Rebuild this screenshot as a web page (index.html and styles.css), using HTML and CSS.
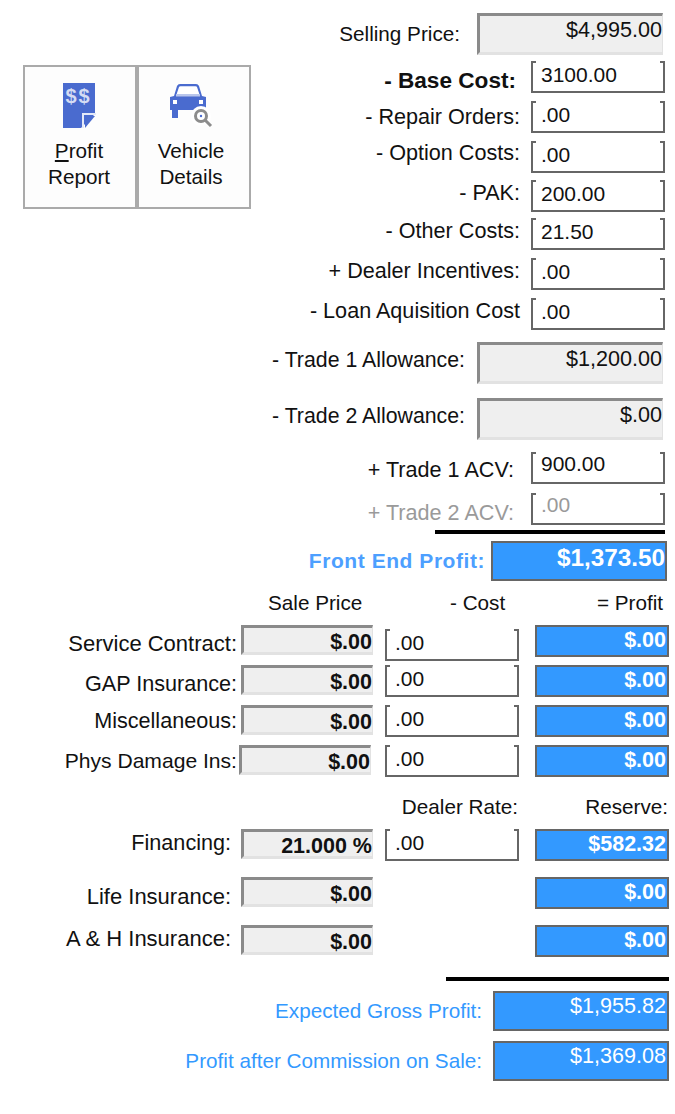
FILE: index.html
```html
<!DOCTYPE html>
<html lang="en">
<head>
  <meta charset="UTF-8" />
  <title>Deal Profit</title>
  <link rel="stylesheet" href="styles.css">
</head>
<body>
  <div class="top">
    <div class="toolbar">
      <div class="tool-btn">
        <svg class="tool-icon" width="40" height="46" viewBox="0 0 40 46">
          <path d="M4 0h32v31L22 45H4z" fill="#4a6bcf"/>
          <text x="19.500" y="20" class="doc-money">$$</text>
          <path d="M23 45V30h14v2H25v13z" fill="#e4e9f8"/>
          <path d="M26 45V33h10z" fill="#4a6bcf"/>
        </svg>
        <span><u>P</u>rofit<br>Report</span>
      </div>
      <div class="tool-btn tool-btn-car">
        <svg class="tool-icon" width="46" height="46" viewBox="0 0 46 46">
          <path d="M2 14l4-1 3-10q.8-2 3-2h16q2.200 0 3 2l3 10 4 1v13H2z" fill="#4a6bcf"/>
          <path d="M8 13l3-9q.3-.8 1.500-.8h15q1.200 0 1.500.8l3 9z" fill="#fff"/>
          <rect x="8" y="11" width="24" height="2.500" fill="#b9c6ec"/>
          <rect x="5" y="17" width="4" height="4" fill="#fff"/>
          <rect x="31" y="17" width="4" height="4" fill="#fff"/>
          <rect x="4" y="27" width="6" height="8" fill="#4a6bcf"/>
          <circle cx="33" cy="33" r="10" fill="#fff"/>
          <circle cx="33" cy="33" r="5.500" fill="none" stroke="#8c8c8c" stroke-width="3"/>
          <circle cx="33" cy="33" r="1.200" fill="#4a6bcf"/>
          <path d="M37 37l6 6" stroke="#8c8c8c" stroke-width="3"/>
        </svg>
        <span>Vehicle<br>Details</span>
      </div>
    </div>

    <div class="costs">
      <div class="row row-selling">
        <label class="narrow gap-17">Selling Price:</label>
        <div class="readout">$4,995.00</div>
      </div>
      <div class="row m6">
        <label class="gap-15 drop-4"><b>- Base Cost:</b></label>
        <input class="txt" value="3100.00">
      </div>
      <div class="row m8">
        <label>- Repair Orders:</label>
        <input class="txt" value=".00">
      </div>
      <div class="row m8">
        <label class="lift-4">- Option Costs:</label>
        <input class="txt" value=".00">
      </div>
      <div class="row m7">
        <label class="lift-3">- PAK:</label>
        <input class="txt" value="200.00">
      </div>
      <div class="row m6">
        <label class="lift-3">- Other Costs:</label>
        <input class="txt" value="21.50">
      </div>
      <div class="row m8">
        <label class="lift-3">+ Dealer Incentives:</label>
        <input class="txt" value=".00">
      </div>
      <div class="row m8">
        <label class="lift-3">- Loan Aquisition Cost</label>
        <input class="txt" value=".00">
      </div>
      <div class="row row-selling m12">
        <label class="gap-12 lift-3 allowance">- Trade 1 Allowance:</label>
        <div class="readout">$1,200.00</div>
      </div>
      <div class="row row-selling m14">
        <label class="gap-12 lift-3 allowance">- Trade 2 Allowance:</label>
        <div class="readout">$.00</div>
      </div>
      <div class="row m12">
        <label class="gap-17 drop-2">+ Trade 1 ACV:</label>
        <input class="txt txt-up" value="900.00">
      </div>
      <div class="row m9 disabled">
        <label class="gap-17 drop-4">+ Trade 2 ACV:</label>
        <input class="txt txt-up" value=".00" disabled>
      </div>
      <div class="rule rule-front"></div>
      <div class="row row-front">
        <label class="gap-6">Front End Profit:</label>
        <div class="blue blue-front">$1,373.50</div>
      </div>
    </div>
  </div>

  <div class="grid">
    <div class="grid-head"></div>
    <div class="grid-head center-sale">Sale Price</div>
    <div class="grid-head center-cost">- Cost</div>
    <div class="grid-head right-profit">= Profit</div>

    <label class="wide">Service Contract:</label>
    <div class="readout small">$.00</div>
    <input class="txt cost first-cost" value=".00">
    <div class="blue">$.00</div>

    <label>GAP Insurance:</label>
    <div class="readout small">$.00</div>
    <input class="txt cost" value=".00">
    <div class="blue">$.00</div>

    <label class="high">Miscellaneous:</label>
    <div class="readout small">$.00</div>
    <input class="txt cost" value=".00">
    <div class="blue">$.00</div>

    <label class="high phys">Phys Damage Ins:</label>
    <div class="readout small shifted">$.00</div>
    <input class="txt cost" value=".00">
    <div class="blue">$.00</div>
  </div>

  <div class="grid grid-finance">
    <div class="grid-head"></div>
    <div class="grid-head"></div>
    <div class="grid-head right-rate">Dealer Rate:</div>
    <div class="grid-head right-reserve">Reserve:</div>

    <label>Financing:</label>
    <div class="readout small">21.000 %</div>
    <input class="txt cost" value=".00">
    <div class="blue">$582.32</div>

    <label class="low wide">Life Insurance:</label>
    <div class="readout small">$.00</div>
    <div></div>
    <div class="blue">$.00</div>

    <label class="wide">A &amp; H Insurance:</label>
    <div class="readout small">$.00</div>
    <div></div>
    <div class="blue">$.00</div>
  </div>

  <div class="totals">
    <div class="rule rule-total"></div>
    <div class="row row-total">
      <label>Expected Gross Profit:</label>
      <div class="blue blue-total">$1,955.82</div>
    </div>
    <div class="row row-total">
      <label>Profit after Commission on Sale:</label>
      <div class="blue blue-total">$1,369.08</div>
    </div>
  </div>
</body>
</html>
```

FILE: styles.css
```css
html, body {
  margin: 0;
  padding: 0;
  background-color: white;
  color: #111;
  font-family: "Liberation Sans", Arial, sans-serif;
  font-size: 21.6px;
  overflow: hidden;
}

.top {
  display: flex;
  justify-content: space-between;
  align-items: flex-start;
}

.toolbar {
  display: flex;
  margin: 65px 0 0 23px;
}

.tool-btn {
  width: 114px;
  height: 144px;
  box-sizing: border-box;
  border: 2px solid #aaaaaa;
  background-color: #fdfdfd;
  display: flex;
  flex-direction: column;
  align-items: center;
  text-align: center;
  font-size: 20.7px;
  line-height: 26px;
  padding: 16px 2px 0 0;
}

.tool-btn-car {
  padding-right: 6px;
}

.tool-icon {
  height: 46px;
  margin-bottom: 9px;
}

.doc-money {
  fill: #d5dcf3;
  font-family: "Liberation Sans", Arial, sans-serif;
  font-size: 20px;
  font-weight: bold;
  text-anchor: middle;
  letter-spacing: 2px;
}

.costs {
  display: flex;
  flex-direction: column;
  padding-top: 13px;
}

.row {
  display: flex;
  justify-content: flex-end;
  align-items: center;
  padding-right: 10px;
}

.row label {
  margin-right: 11px;
  line-height: 20px;
  white-space: nowrap;
}

.row label b { font-size: 22.6px; }
.row label.narrow { font-size: 20.7px; }
.row label.allowance { font-size: 21.3px; }
.row label.gap-6 { margin-right: 6px; }
.row label.gap-12 { margin-right: 12px; }
.row label.gap-15 { margin-right: 15px; }
.row label.gap-17 { margin-right: 17px; }

.lift-3 { padding-bottom: 6px; }
.lift-4 { padding-bottom: 8px; }
.drop-2 { padding-top: 4px; }
.drop-4 { padding-top: 8px; }

.m6 { margin-top: 6px; }
.m7 { margin-top: 7px; }
.m8 { margin-top: 8px; }
.m9 { margin-top: 9px; }
.m12 { margin-top: 12px; }
.m14 { margin-top: 14px; }

.row-selling {
  padding-right: 12px;
}

.readout {
  width: 186px;
  height: 42px;
  box-sizing: border-box;
  background-color: #efefef;
  border-style: solid;
  border-width: 3px 1px 3px 3px;
  border-color: #8a8a8a #e2e2e2 #e2e2e2 #8a8a8a;
  text-align: right;
  line-height: 28px;
}

.readout.small {
  width: 132px;
  height: 30px;
  font-weight: bold;
  font-size: 21.5px;
  line-height: 29px;
}

.readout.shifted {
  margin-left: -2px;
}

.txt {
  width: 134px;
  height: 32px;
  box-sizing: border-box;
  margin: 0;
  padding: 0 0 2px 8px;
  border-style: solid;
  border-color: #666666;
  border-width: 0 2px 2px 2px;
  border-radius: 0;
  outline: none;
  font: inherit;
  font-size: 21px;
  color: #111;
  background-color: white;
  background-image: linear-gradient(#666666, #666666), linear-gradient(#666666, #666666);
  background-size: 3px 2px;
  background-position: left top, right top;
  background-repeat: no-repeat;
}

.txt-up {
  padding-bottom: 7px;
}

.disabled label,
.txt:disabled {
  color: #9a9a9a;
}

.rule {
  height: 4px;
  background-color: black;
}

.rule-front {
  width: 230px;
  margin: 5px 10px 0 auto;
}

.row-front {
  margin-top: 7px;
  padding-right: 8px;
}

.row-front label {
  color: #4d9fff;
  font-weight: bold;
  font-size: 21px;
  letter-spacing: 0.55px;
}

.blue {
  height: 32px;
  box-sizing: border-box;
  border: 2px solid #666666;
  padding-right: 1px;
  background-color: #3399ff;
  color: white;
  font-weight: bold;
  text-align: right;
  line-height: 27px;
  font-size: 21.5px;
}

.blue-front {
  width: 176px;
  height: 40px;
  padding-right: 0;
  line-height: 29px;
  font-size: 24.3px;
}

.grid {
  display: grid;
  grid-template-columns: 241px 144px 150px 134px;
  grid-template-rows: 26px repeat(4, 32px);
  row-gap: 8px;
  margin-top: 10px;
}

.grid label {
  text-align: right;
  padding-right: 4px;
  line-height: 38px;
  white-space: nowrap;
}

.grid label.high {
  line-height: 32px;
}

.grid label.phys {
  font-size: 21.1px;
}

.grid label.wide {
  font-size: 22px;
}

.grid-head {
  line-height: 24px;
  height: 24px;
  white-space: nowrap;
}

.center-sale { padding-left: 27px; font-size: 20.7px; }
.center-cost { padding-left: 65px; font-size: 20.7px; }
.right-profit { text-align: right; padding-right: 6px; font-size: 20.7px; }
.right-rate { text-align: right; padding-right: 17px; font-size: 20.7px; }
.right-reserve { text-align: right; padding-right: 1px; font-size: 20.7px; }

.first-cost {
  margin-top: 4px;
}

.grid-finance {
  grid-template-rows: 18px repeat(3, 32px);
  margin-top: 18px;
  row-gap: 16px;
}

.grid-finance label {
  padding-right: 10px;
  line-height: 28px;
}

.grid-finance label.low {
  line-height: 40px;
}

.totals {
  display: flex;
  flex-direction: column;
  margin-top: 20px;
}

.rule-total {
  width: 223px;
  margin: 0 6px 10px auto;
}

.row-total {
  padding-right: 6px;
  margin-bottom: 10px;
}

.row-total label {
  color: #3399ff;
  font-size: 20.7px;
}

.blue-total {
  width: 176px;
  height: 40px;
  font-weight: normal;
  font-size: 21.6px;
  line-height: 26px;
}
```
